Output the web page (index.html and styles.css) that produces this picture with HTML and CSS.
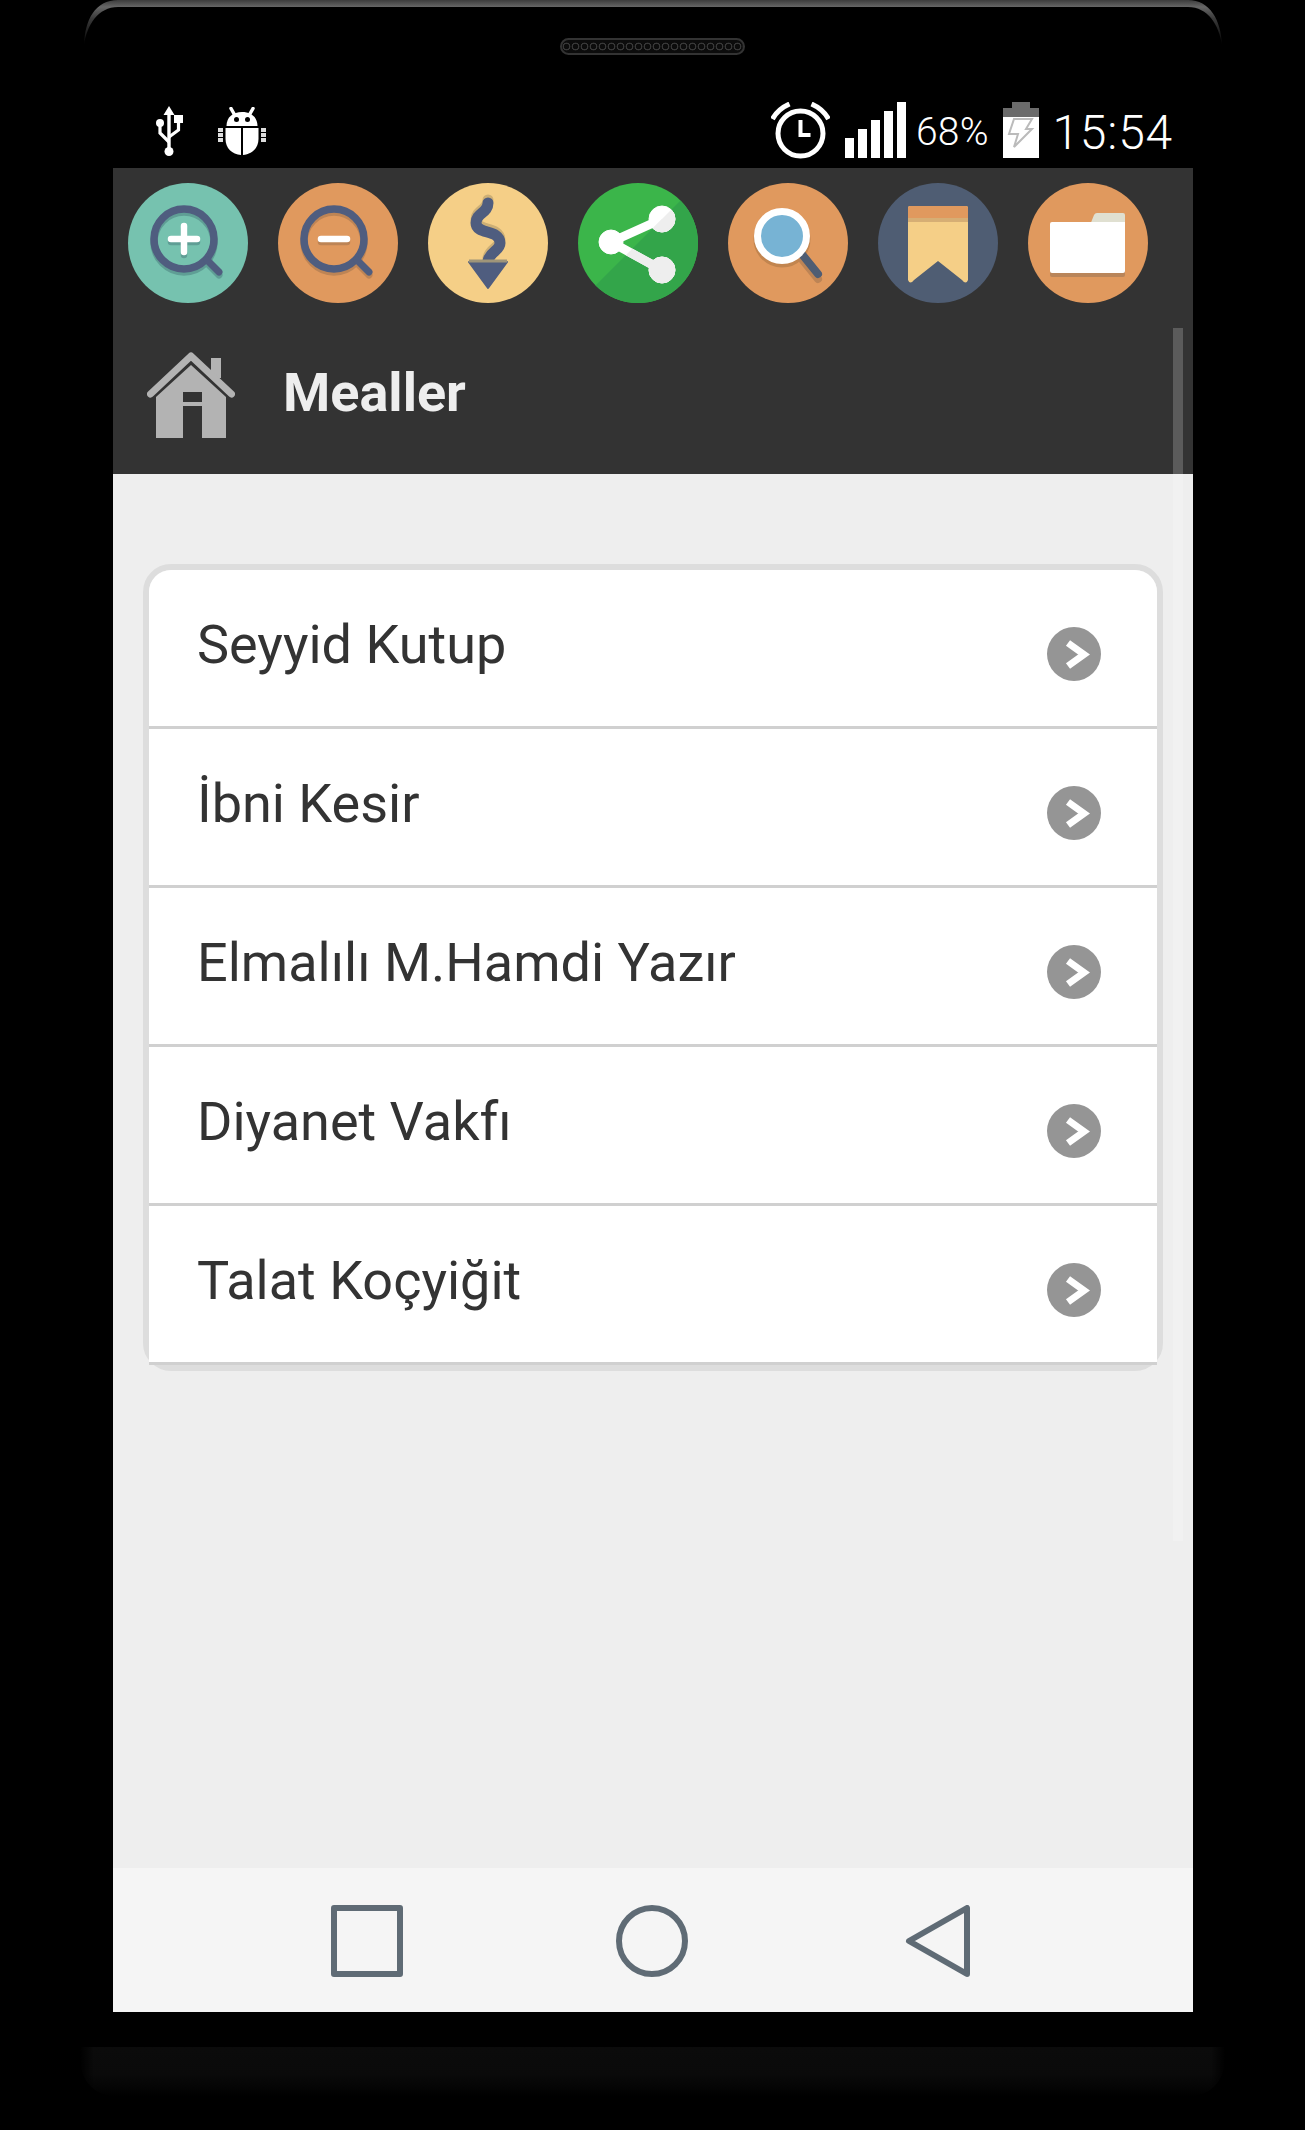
FILE: index.html
```html
<!DOCTYPE html>
<html lang="tr">
<head>
<meta charset="utf-8">
<title>Mealler</title>
<link rel="stylesheet" href="styles.css">
</head>
<body>
<div class="device">
  <svg class="bezel" viewBox="0 0 1305 50" width="1305" height="50" aria-hidden="true">
    <defs>
      <linearGradient id="bz" gradientUnits="userSpaceOnUse" x1="0" y1="0" x2="0" y2="46">
        <stop offset="0" stop-color="#3c3c3c"/>
        <stop offset="0.15" stop-color="#666"/>
        <stop offset="0.4" stop-color="#3a3a3a"/>
        <stop offset="1" stop-color="#000"/>
      </linearGradient>
    </defs>
    <path fill="url(#bz)" d="M84 45C85 20 95 0 118 0L1188 0C1210 0 1221 20 1222 45C1219 25 1208 7 1188 7L118 7C98 7 87 25 84 45Z"/>
  </svg>

  <header class="top">
    <div class="speaker"></div>
    <div class="status">
      <svg class="i-usb" viewBox="0 0 27 50" aria-hidden="true">
        <path d="M13 0l5.500 9h-3.800v33h-3.400V9H7.500z" fill="#fff"/>
        <circle cx="13" cy="45.500" r="4.500" fill="#fff"/>
        <circle cx="4" cy="17" r="4" fill="#fff"/>
        <rect x="18" y="9" width="9" height="8" fill="#fff"/>
        <path d="M4 18v9l9 9M22.500 16v8l-9.500 7" fill="none" stroke="#fff" stroke-width="3.200"/>
      </svg>
      <svg class="i-bug" viewBox="0 0 48 48" aria-hidden="true">
        <path d="M13 1.500l4 7M35 1.500l-4 7" stroke="#fff" stroke-width="3.500" stroke-linecap="round"/>
        <path d="M8.500 19C8.500 10 15 5 24 5s15.500 5 15.500 14z" fill="#fff"/>
        <circle cx="18.500" cy="12.500" r="2.500" fill="#000"/>
        <circle cx="29.500" cy="12.500" r="2.500" fill="#000"/>
        <path d="M7.500 21H23v27C14 47.500 7.500 41 7.500 32zM25 21h15.500v11C40.500 41 34 47.500 25 48z" fill="#fff"/>
        <path d="M0 21h5v4H0zM0 26h5v4H0zM0 31h5v4H0zM43 21h5v4h-5zM43 26h5v4h-5zM43 31h5v4h-5z" fill="#ddd"/>
      </svg>
      <div class="status-space"></div>
      <svg class="i-alarm" viewBox="0 0 59 57" aria-hidden="true">
        <circle cx="29.500" cy="31.500" r="22.500" fill="none" stroke="#fff" stroke-width="5"/>
        <path d="M29.500 18v15h10" fill="none" stroke="#fff" stroke-width="4"/>
        <path d="M1.500 17Q7 7 18.500 2M57.500 17Q52 7 40.500 2" fill="none" stroke="#fff" stroke-width="5"/>
      </svg>
      <svg class="i-signal" viewBox="0 0 61 56" aria-hidden="true">
        <rect x="0" y="36" width="9" height="20" fill="#fff"/>
        <rect x="13" y="27" width="9" height="29" fill="#fff"/>
        <rect x="26" y="18" width="9" height="38" fill="#fff"/>
        <rect x="39" y="9" width="9" height="47" fill="#fff"/>
        <rect x="52" y="0" width="9" height="56" fill="#fff"/>
      </svg>
      <span class="pct">68%</span>
      <svg class="i-batt" viewBox="0 0 36 56" aria-hidden="true">
        <rect x="9" y="0" width="18" height="7" fill="#6b6b6b"/>
        <rect x="0" y="6" width="36" height="9" fill="#6b6b6b"/>
        <rect x="0" y="15" width="36" height="41" fill="#fff"/>
        <path d="M11 17H29L23 27H29L11 45L15 32H6z" fill="none" stroke="#bbb" stroke-width="2"/>
      </svg>
      <span class="clock">15:54</span>
    </div>
  </header>

  <main class="screen">
    <div class="scrollbar"></div>
    <section class="appbar">
      <div class="tools">
        <svg class="tool" viewBox="0 0 120 120" aria-hidden="true">
          <circle cx="60" cy="60" r="60" fill="#76c2af"/>
          <g fill="none" stroke="#5f9e95" stroke-linecap="round" transform="translate(0 3)">
            <circle cx="56" cy="56" r="30" stroke-width="7.500"/><path d="M79 77l12 12" stroke-width="7"/><path d="M43 56h26M56 43v26" stroke-width="6.500"/>
          </g>
          <circle cx="56" cy="56" r="30" fill="none" stroke="#4f5d7f" stroke-width="7.500"/>
          <path d="M79 77l12 12" stroke="#4f5d7f" stroke-width="7" stroke-linecap="round"/>
          <path d="M43 56h26M56 43v26" stroke="#fff" stroke-width="6.500" stroke-linecap="round"/>
        </svg>
        <svg class="tool" viewBox="0 0 120 120" aria-hidden="true">
          <circle cx="60" cy="60" r="60" fill="#e0995e"/>
          <g fill="none" stroke="#bd8455" stroke-linecap="round" transform="translate(0 3)">
            <circle cx="56" cy="56" r="30" stroke-width="7.500"/><path d="M79 77l12 12" stroke-width="7"/><path d="M43 56h26" stroke-width="6.500"/>
          </g>
          <circle cx="56" cy="56" r="30" fill="none" stroke="#4f5d7f" stroke-width="7.500"/>
          <path d="M79 77l12 12" stroke="#4f5d7f" stroke-width="7" stroke-linecap="round"/>
          <path d="M43 56h26" stroke="#fff" stroke-width="6.500" stroke-linecap="round"/>
        </svg>
        <svg class="tool" viewBox="0 0 120 120" aria-hidden="true">
          <circle cx="60" cy="60" r="60" fill="#f5cf87"/>
          <path d="M60 20C60 30 48 30 48 40C48 52 72 46 72 60C72 68 62 68 60 78" fill="none" stroke="#cdaf75" stroke-width="11" stroke-linecap="round" transform="translate(0 -3)"/>
          <path d="M60 20C60 30 48 30 48 40C48 52 72 46 72 60C72 68 62 68 60 78" fill="none" stroke="#4f5d7f" stroke-width="11" stroke-linecap="round"/>
          <path d="M41 79H79L60 105z" fill="#4f5d7f" stroke="#4f5d7f" stroke-width="2" stroke-linejoin="round"/>
          <path d="M41 78H79" stroke="#9f9579" stroke-width="3"/>
        </svg>
        <svg class="tool" viewBox="0 0 120 120" aria-hidden="true">
          <defs>
            <clipPath id="c-lo"><path d="M0 120V124H130V0H120L18 102z"/></clipPath>
          </defs>
          <circle cx="60" cy="60" r="60" fill="#3bb54a"/>
          <circle cx="60" cy="60" r="60" fill="#33a54a" clip-path="url(#c-lo)"/>
          <g fill="#fff" stroke="#fff">
            <circle cx="33" cy="59" r="12"/><circle cx="84" cy="36" r="13"/><circle cx="84" cy="87" r="13"/>
            <path d="M33 59L84 36M33 59L84 87" stroke-width="9"/>
          </g>
          <g fill="#eee" stroke="#eee" clip-path="url(#c-lo)">
            <circle cx="33" cy="59" r="12"/><circle cx="84" cy="36" r="13"/><circle cx="84" cy="87" r="13"/>
            <path d="M33 59L84 36M33 59L84 87" stroke-width="9"/>
          </g>
        </svg>
        <svg class="tool" viewBox="0 0 120 120" aria-hidden="true">
          <circle cx="60" cy="60" r="60" fill="#e0995e"/>
          <circle cx="54" cy="56" r="25" fill="none" stroke="#c2854f" stroke-width="7"/>
          <path d="M73 72l17 21" stroke="#bd8455" stroke-width="8" stroke-linecap="round" transform="translate(0 3)"/>
          <path d="M73 70l17 21" stroke="#4f5d73" stroke-width="8" stroke-linecap="round"/>
          <circle cx="54" cy="53" r="24.500" fill="#77b3d4" stroke="#fff" stroke-width="7"/>
        </svg>
        <svg class="tool" viewBox="0 0 120 120" aria-hidden="true">
          <circle cx="60" cy="60" r="60" fill="#4f5d73"/>
          <path d="M30 25Q30 23 32 23H88Q90 23 90 25V97Q88 102 84 97L60 78L36 97Q32 102 30 97z" fill="#f5cf87"/>
          <path d="M30 35V25Q30 23 32 23H88Q90 23 90 25V35z" fill="#e0995e"/>
          <rect x="30" y="35" width="60" height="4" fill="#d6ae74"/>
        </svg>
        <svg class="tool" viewBox="0 0 120 120" aria-hidden="true">
          <circle cx="60" cy="60" r="60" fill="#e0995e"/>
          <path d="M62 42L66 32Q67 30 69 30H95Q97 30 97 32V42z" fill="#e0e0d1"/>
          <path d="M22 45Q22 43 24 43H97V92Q97 94 95 94H24Q22 94 22 92z" fill="#b9855a"/>
          <path d="M24 39H97V88Q97 90 95 90H24Q22 90 22 88V41Q22 39 24 39z" fill="#fff"/>
        </svg>
      </div>
      <div class="title-row">
        <svg class="home" viewBox="0 0 88 86" aria-hidden="true">
          <path d="M64 6H74V26H64z" fill="#b3b3b3"/>
          <path d="M3.500 42L44 4L84.500 42" fill="none" stroke="#b3b3b3" stroke-width="7" stroke-linecap="round" stroke-linejoin="round"/>
          <path d="M9 45L44 13L79 45V86H55V54H36V86H9zM36 40V50H55V40z" fill="#b3b3b3" fill-rule="evenodd"/>
        </svg>
        <h1 class="title">Mealler</h1>
      </div>
    </section>

    <section class="content">
      <ul class="card">
        <li class="row"><span class="label">Seyyid Kutup</span><svg class="chev" viewBox="0 0 54 54" aria-hidden="true"><use href="#chev-g"/></svg></li>
        <li class="row"><span class="label">İbni Kesir</span><svg class="chev" viewBox="0 0 54 54" aria-hidden="true"><use href="#chev-g"/></svg></li>
        <li class="row"><span class="label">Elmalılı M.Hamdi Yazır</span><svg class="chev" viewBox="0 0 54 54" aria-hidden="true"><use href="#chev-g"/></svg></li>
        <li class="row"><span class="label">Diyanet Vakfı</span><svg class="chev" viewBox="0 0 54 54" aria-hidden="true"><use href="#chev-g"/></svg></li>
        <li class="row"><span class="label">Talat Koçyiğit</span><svg class="chev" viewBox="0 0 54 54" aria-hidden="true"><use href="#chev-g"/></svg></li>
      </ul>
    </section>

    <nav class="navbar">
      <svg class="nav-i" viewBox="0 0 72 72" aria-hidden="true"><rect x="3" y="3" width="66" height="66" fill="none" stroke="#5f6b75" stroke-width="6" stroke-linejoin="round"/></svg>
      <svg class="nav-i" viewBox="0 0 72 72" aria-hidden="true"><circle cx="36" cy="36" r="33" fill="none" stroke="#5f6b75" stroke-width="6"/></svg>
      <svg class="nav-i" viewBox="0 0 72 72" aria-hidden="true"><path d="M66 3V69L8 36z" fill="none" stroke="#5f6b75" stroke-width="6" stroke-linejoin="round"/></svg>
    </nav>
  </main>

  <div class="chin"></div>

  <svg class="defs" width="0" height="0" aria-hidden="true">
    <g id="chev-g">
      <circle cx="27" cy="27" r="27" fill="#959595"/>
      <path d="M21 16L37 27.500L21 39" fill="none" stroke="#fff" stroke-width="7"/>
    </g>
  </svg>
</div>
</body>
</html>
```
FILE: styles.css
```css
* { box-sizing: border-box; }
html, body { margin: 0; padding: 0; background: #000; }
body { font-family: Roboto, "Noto Sans", sans-serif; overflow: hidden; }

.device { position: relative; width: 1305px; height: 2130px; background: #000; }
.bezel { position: absolute; left: 0; top: 0; display: block; }
.defs { position: absolute; }

.top { height: 168px; padding-top: 38px; display: flex; flex-direction: column; }
.speaker {
  width: 185px; height: 17px; margin-left: 560px; border-radius: 9px;
  border: 2px solid #333;
  background: radial-gradient(circle at center, transparent 2.5px, #383838 3px, #383838 3.6px, transparent 4.2px) 0 0 / 9px 100% repeat-x #0c0c0c;
}
.status {
  display: flex; align-items: flex-end; height: 56px; margin-top: 47px;
  padding: 0 132px 0 156px;
}
.status-space { flex: 1; }
.i-usb { width: 27px; height: 50px; margin-bottom: 2px; }
.i-bug { width: 48px; height: 48px; margin: 0 0 3px 35px; }
.i-alarm { width: 59px; height: 57px; margin-bottom: -1px; }
.i-signal { width: 61px; height: 56px; margin-left: 15px; }
.i-batt { width: 36px; height: 56px; margin-left: 14px; }
.pct { font-size: 39px; line-height: 39px; color: #fff; font-weight: 300; letter-spacing: .3px; margin: 0 0 6px 10px; }
.clock { font-size: 48px; line-height: 48px; color: #fff; font-weight: 300; letter-spacing: .8px; margin: 0 0 1px 13.500px; }

.screen {
  position: relative; width: 1080px; height: 1844px; margin-left: 113px;
  display: flex; flex-direction: column; background: #eee;
}
.scrollbar {
  position: absolute; right: 10px; top: 160px; width: 10px; height: 1213px;
  background: rgba(255, 255, 255, .2);
}

.appbar { height: 306px; background: #333; padding: 15px 0 0 15px; }
.tools { display: flex; gap: 30px; }
.tool { width: 120px; height: 120px; display: block; }
.title-row { display: flex; align-items: center; margin-top: 49px; padding-left: 19px; }
.home { width: 88px; height: 86px; display: block; }
.title { margin: 0 0 4px 48px; font-size: 54px; line-height: 64px; font-weight: 700; color: #eee; }

.content { flex: 1; padding: 90px 30px 0; }
.card {
  list-style: none; margin: 0; padding: 0;
  border: 6px solid #ddd; border-radius: 28px;
}
.row {
  height: 159px; display: flex; align-items: flex-start; justify-content: space-between;
  background: #fff; border-bottom: 3px solid #d0d0d0;
  padding: 43px 56px 0 48px;
}
.row:first-child { border-radius: 22px 22px 0 0; }
.label { font-size: 54px; line-height: 64px; color: #333; }
.chev { width: 54px; height: 54px; display: block; margin-top: 14px; }

.navbar {
  height: 144px; background: #f5f5f5; display: flex; gap: 213px;
  padding: 37px 0 0 218px;
}
.nav-i { width: 72px; height: 72px; display: block; }

.chin {
  height: 50px; margin: 35px 80px 0; border-radius: 0 0 36px 36px;
  background:
    linear-gradient(90deg, #000, transparent 14px, transparent calc(100% - 14px), #000),
    linear-gradient(#0b0b0b, #0a0a0a 55%, #000);
}
```
